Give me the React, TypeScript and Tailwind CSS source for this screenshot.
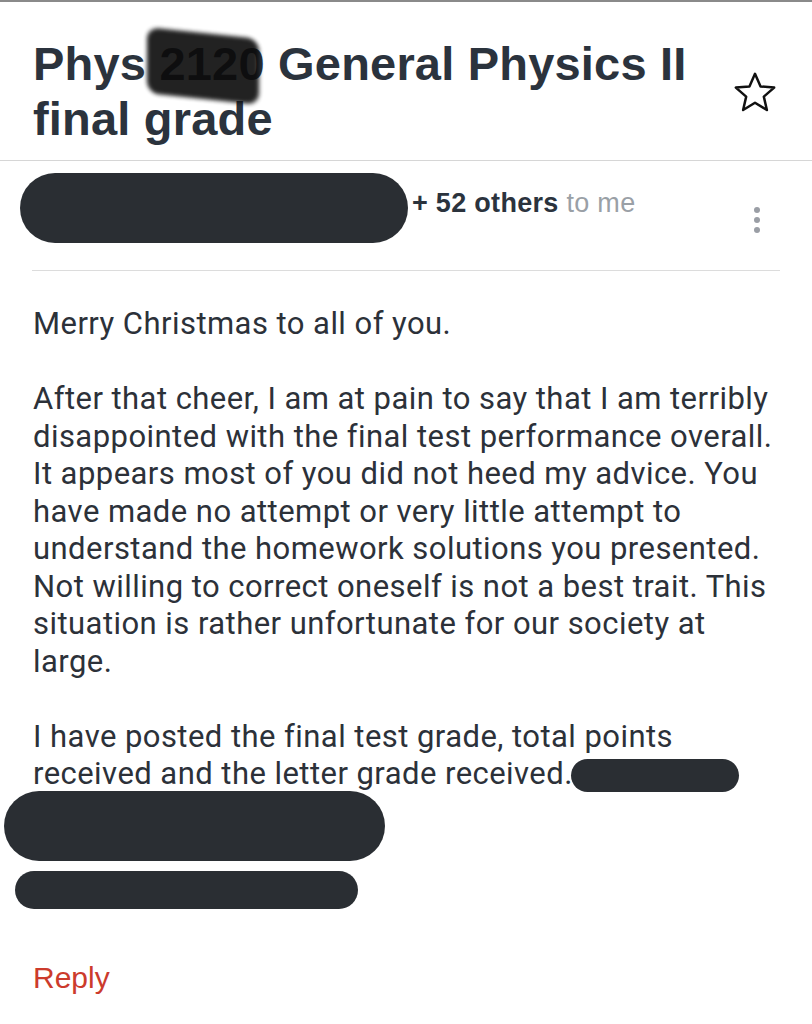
import React from "react";

const redact = "bg-[#2a2e33] rounded-full";

function Star() {
  return (
    <svg width="46" height="46" viewBox="0 0 24 24" fill="none" stroke="#111" strokeWidth="1.3" strokeLinejoin="round">
      <path d="M12 2.5l2.9 6.6 7.1.6-5.4 4.7 1.6 7-6.2-3.8-6.2 3.8 1.6-7L2 9.7l7.1-.6z" />
    </svg>
  );
}

export default function App() {
  return (
    <div className="w-[812px] h-[1024px] bg-white overflow-hidden border-t-2 border-[#8a8a8a] font-['Roboto',sans-serif]">
      <div className="flex items-start pl-[33px] pr-[34px] pt-[34px] h-[159px] border-b border-[#d6d6d6]">
        <h1 className="flex-1 text-[47px] leading-[55px] font-bold tracking-[0.2px] text-[#2b333d] font-['Liberation_Sans',sans-serif] whitespace-nowrap">
          Phys{" "}
          <span className="relative">
            2120
            <span className="absolute left-[-12px] top-[-4px] w-[112px] h-[66px] bg-[#0b0b0b] rounded-[12px] opacity-90 blur-[2px] skew-y-6" />
          </span>{" "}
          General Physics II
          <br />
          final grade
        </h1>
        <div className="mt-[33px]">
          <Star />
        </div>
      </div>

      <div className="flex items-center h-[110px] mx-[32px] border-b border-[#dcdcdc]">
        <div className={`${redact} w-[388px] h-[70px] ml-[-12px] mt-[-16px] shrink-0`} />
        <div className="ml-[4px] mt-[-24px] text-[27px] font-['Liberation_Sans',sans-serif] whitespace-nowrap">
          <span className="font-bold text-[#2b333d] tracking-[0.3px]">+ 52 others</span>
          <span className="text-[#9aa0a6] tracking-[0.3px]"> to me</span>
        </div>
        <div className="ml-auto mr-[20px] flex flex-col gap-[4px] mt-[8px]">
          <span className="w-[6px] h-[6px] rounded-full bg-[#9a9ea5]" />
          <span className="w-[6px] h-[6px] rounded-full bg-[#9a9ea5]" />
          <span className="w-[6px] h-[6px] rounded-full bg-[#9a9ea5]" />
        </div>
      </div>

      <div className="px-[33px] pt-[34px] text-[31px] leading-[37.5px] text-[#2c3139] tracking-[0.45px] whitespace-nowrap">
        <p>Merry Christmas to all of you.</p>
        <p className="mt-[37.5px]">
          After that cheer, I am at pain to say that I am terribly
          <br />
          disappointed with the final test performance overall.
          <br />
          It appears most of you did not heed my advice. You
          <br />
          have made no attempt or very little attempt to
          <br />
          understand the homework solutions you presented.
          <br />
          Not willing to correct oneself is not a best trait. This
          <br />
          situation is rather unfortunate for our society at
          <br />
          large.
        </p>
        <p className="mt-[37.5px]">
          I have posted the final test grade, total points
          <br />
          received and the letter grade received.
          <span className={`${redact} inline-block align-middle w-[168px] h-[33px] ml-[-2px]`} />
        </p>
      </div>

      <div className="pl-[4px]">
        <div className={`${redact} w-[381px] h-[70px] mt-[-2px]`} />
        <div className={`${redact} w-[343px] h-[38px] mt-[10px] ml-[11px]`} />
      </div>

      <div className="pl-[33px] mt-[51px] text-[30px] leading-[36px] text-[#cc3b2c] font-['Liberation_Sans',sans-serif]">Reply</div>
    </div>
  );
}
